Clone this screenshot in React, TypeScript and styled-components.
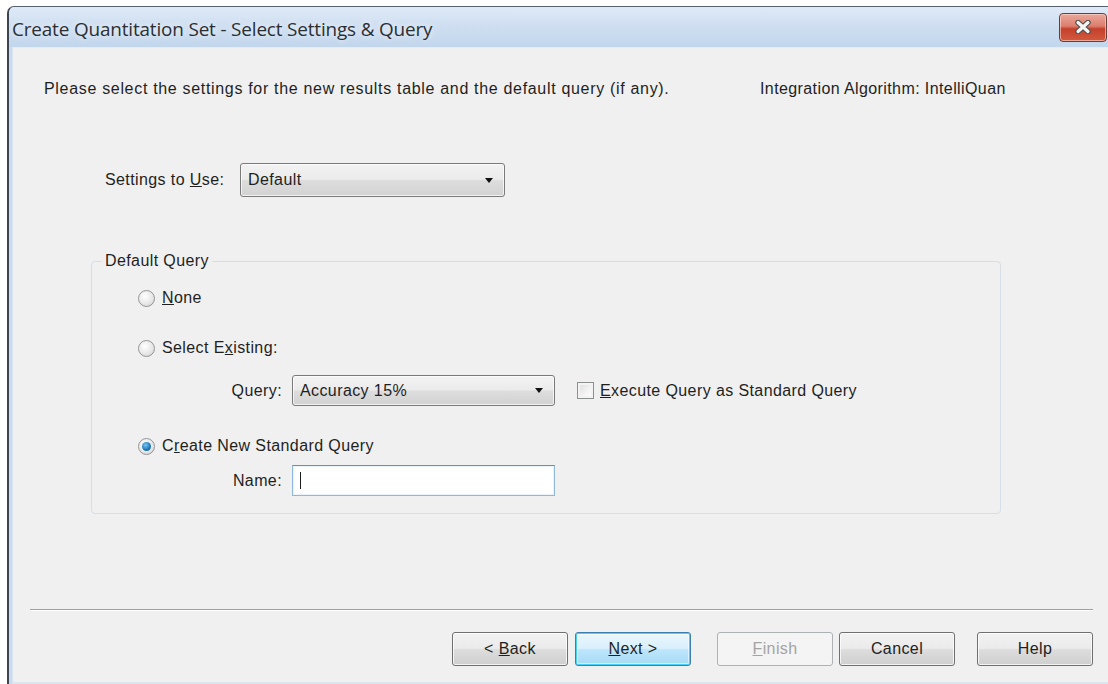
import styled, { createGlobalStyle, css } from 'styled-components';

const GlobalStyle = createGlobalStyle`
  html, body {
    margin: 0;
    padding: 0;
    background: #ffffff;
    overflow: hidden;
  }
  * {
    box-sizing: border-box;
  }
`;

const App = () => {
  return (
    <>
      <GlobalStyle />
      <Window>
        <TitleBar>
          <Title>Create Quantitation Set - Select Settings &amp; Query</Title>
          <CloseButton aria-label='Close'>
            <svg width='20' height='14' viewBox='0 0 20 14'>
              <path
                d='M5 2.5 L15 11.5 M15 2.5 L5 11.5'
                stroke='#4f4f4f'
                strokeWidth='5.5'
                strokeLinecap='round'
              />
              <path
                d='M5 2.5 L15 11.5 M15 2.5 L5 11.5'
                stroke='#f4f4f4'
                strokeWidth='3.2'
                strokeLinecap='round'
              />
            </svg>
          </CloseButton>
        </TitleBar>
        <Body>
          <IntroRow>
            <IntroText>
              Please select the settings for the new results table and the default query (if any).
            </IntroText>
            <Label>Integration Algorithm: IntelliQuan</Label>
          </IntroRow>

          <SettingsRow>
            <SettingsLabel>
              Settings to <u>U</u>se:
            </SettingsLabel>
            <Combo $width={265} $height={34}>
              <span>Default</span>
              <Arrow />
            </Combo>
          </SettingsRow>

          <GroupBox>
            <Legend>Default Query</Legend>

            <OptionRow $gap={13}>
              <Radio />
              <Label>
                <u>N</u>one
              </Label>
            </OptionRow>

            <OptionRow $gap={20}>
              <Radio />
              <Label>
                Select E<u>x</u>isting:
              </Label>
            </OptionRow>

            <SubRow $gap={12}>
              <SubLabel>Query:</SubLabel>
              <Combo $width={263} $height={31}>
                <span>Accuracy 15%</span>
                <Arrow />
              </Combo>
              <CheckRow>
                <CheckBox />
                <Label>
                  <u>E</u>xecute Query as Standard Query
                </Label>
              </CheckRow>
            </SubRow>

            <OptionRow $gap={25}>
              <Radio $checked />
              <Label>
                C<u>r</u>eate New Standard Query
              </Label>
            </OptionRow>

            <SubRow $gap={4}>
              <SubLabel>Name:</SubLabel>
              <NameInput>
                <Caret />
              </NameInput>
            </SubRow>
          </GroupBox>

          <Separator />

          <ButtonBar>
            <WizardButton>
              {'< '}
              <u>B</u>ack
            </WizardButton>
            <WizardButton $variant='default' $gap={7}>
              <u>N</u>ext{' >'}
            </WizardButton>
            <WizardButton $variant='disabled' $gap={26}>
              <u>F</u>inish
            </WizardButton>
            <WizardButton $gap={6}>Cancel</WizardButton>
            <WizardButton $gap={22}>Help</WizardButton>
          </ButtonBar>
        </Body>
      </Window>
    </>
  );
};

export default App;

const uiFont = css`
  font-family: 'Liberation Sans', Arial, sans-serif;
  font-size: 16px;
  letter-spacing: 0.4px;
  color: #1f1f1f;
`;

const Window = styled.div`
  display: flex;
  flex-direction: column;
  width: 1110px;
  height: 678px;
  margin: 6px 0 0 7px;
  border-top: 1px solid #55606c;
  border-left: 2px solid #3d4650;
  border-top-left-radius: 7px;
  background: #c9dbef;
  overflow: hidden;
`;

const TitleBar = styled.div`
  display: flex;
  align-items: center;
  height: 40px;
  padding-left: 3px;
  background: linear-gradient(to bottom, #dfeaf7 0%, #cfdff1 45%, #c2d6ec 100%);
`;

const Title = styled.div`
  flex: 1;
  padding-top: 4px;
  font-family: 'Open Sans', 'Noto Sans', sans-serif;
  font-size: 18.9px;
  letter-spacing: -0.15px;
  color: #2a2f36;
  text-shadow: 0 0 6px rgba(255, 255, 255, 0.9);
`;

const CloseButton = styled.div`
  display: flex;
  align-items: center;
  justify-content: center;
  width: 48px;
  height: 29px;
  margin: 0 10px 0 0;
  border: 1px solid #6e3b38;
  border-radius: 4px;
  background: linear-gradient(to bottom, #e9a89c 0%, #dc7e6d 45%, #c4412c 55%, #d25a3e 100%);
  box-shadow: inset 0 0 0 1px rgba(255, 220, 210, 0.6);
`;

const Body = styled.div`
  flex: 1;
  display: flex;
  flex-direction: column;
  margin-left: 3px;
  background: #f0f0f0;
  border-top: 1px solid #e3ebf4;
  border-left: 1px solid #dbe4ee;
  border-bottom: 2px solid #dde6f0;
`;

const IntroRow = styled.div`
  display: flex;
  align-items: center;
  height: 18px;
  margin-top: 32px;
  padding-left: 31px;
`;

const IntroText = styled.div`
  ${uiFont};
  width: 716px;
  letter-spacing: 0.68px;
  white-space: nowrap;
`;

const Label = styled.span`
  ${uiFont};
  white-space: nowrap;
`;

const SettingsRow = styled.div`
  display: flex;
  align-items: center;
  margin-top: 65px;
  padding-left: 92px;
`;

const SettingsLabel = styled.span`
  ${uiFont};
  width: 135px;
  white-space: nowrap;
`;

const Combo = styled.div<{ $width: number; $height: number }>`
  ${uiFont};
  display: flex;
  align-items: center;
  justify-content: space-between;
  width: ${({ $width }) => $width}px;
  height: ${({ $height }) => $height}px;
  padding: 0 11px 0 7px;
  border: 1px solid #7a7a7a;
  border-radius: 3px;
  background: linear-gradient(to bottom, #f3f3f3 0%, #ebebeb 48%, #dddddd 52%, #d2d2d2 100%);
  box-shadow: inset 0 0 0 1px rgba(255, 255, 255, 0.7);
`;

const Arrow = styled.span`
  width: 0;
  height: 0;
  border-left: 4.5px solid transparent;
  border-right: 4.5px solid transparent;
  border-top: 5px solid #111;
`;

const GroupBox = styled.fieldset`
  width: 910px;
  margin: 55px 0 0 78px;
  padding: 0 0 17px 0;
  border: 1px solid #d5dfe5;
  border-radius: 4px;
`;

const Legend = styled.legend`
  ${uiFont};
  margin-left: 10px;
  padding: 0 3px;
  line-height: 18px;
`;

const OptionRow = styled.div<{ $gap: number }>`
  display: flex;
  align-items: center;
  gap: 7px;
  height: 30px;
  margin-top: ${({ $gap }) => $gap}px;
  padding-left: 46px;
`;

const Radio = styled.span<{ $checked?: boolean }>`
  position: relative;
  width: 17px;
  height: 17px;
  border-radius: 50%;
  border: 1px solid #949494;
  background: radial-gradient(circle at 40% 35%, #ffffff 0%, #e8e8e8 55%, #cdcdcd 100%);
  &::after {
    content: '';
    display: ${({ $checked }) => ($checked ? 'block' : 'none')};
    position: absolute;
    left: 3px;
    top: 3px;
    width: 9px;
    height: 9px;
    border-radius: 50%;
    background: radial-gradient(circle at 40% 35%, #7cc6f0 0%, #1f7cc0 55%, #0b3f78 100%);
  }
`;

const SubRow = styled.div<{ $gap: number }>`
  display: flex;
  align-items: center;
  height: 31px;
  margin-top: ${({ $gap }) => $gap}px;
  padding-left: 130px;
`;

const SubLabel = styled.span`
  ${uiFont};
  width: 60px;
  margin-right: 10px;
  text-align: right;
  white-space: nowrap;
`;

const CheckRow = styled.div`
  display: flex;
  align-items: center;
  gap: 6px;
  margin-left: 22px;
`;

const CheckBox = styled.span`
  width: 17px;
  height: 17px;
  border: 1px solid #8e8f8f;
  background: linear-gradient(135deg, #dcdcdc 0%, #f4f4f4 60%, #ffffff 100%);
  box-shadow: inset 0 0 0 2px #f3f3f3;
`;

const NameInput = styled.div`
  display: flex;
  align-items: center;
  width: 263px;
  height: 31px;
  padding-left: 7px;
  background: #ffffff;
  border: 1px solid #8fb8e0;
  border-top-color: #5d93c8;
  box-shadow: inset 0 0 0 1px #eaf2fb;
`;

const Caret = styled.span`
  width: 1px;
  height: 17px;
  background: #1c1c1c;
`;

const Separator = styled.div`
  width: 1063px;
  height: 2px;
  margin: 95px 0 0 17px;
  border-top: 1px solid #a0a0a0;
  border-bottom: 1px solid #ffffff;
`;

const ButtonBar = styled.div`
  display: flex;
  margin-top: 21px;
  padding-left: 439px;
`;

const WizardButton = styled.div<{ $variant?: 'default' | 'disabled'; $gap?: number }>`
  ${uiFont};
  display: flex;
  align-items: center;
  justify-content: center;
  width: 116px;
  height: 34px;
  margin-left: ${({ $gap }) => $gap ?? 0}px;
  border: 1px solid #707070;
  border-radius: 3px;
  background: linear-gradient(to bottom, #f2f2f2 0%, #ebebeb 48%, #dddddd 52%, #cfcfcf 100%);
  box-shadow: inset 0 0 0 1px rgba(255, 255, 255, 0.75);
  white-space: pre;
  ${({ $variant }) =>
    $variant === 'default' &&
    css`
      border-color: #3c7fb1;
      box-shadow: inset 0 0 0 1px #48d0f7, inset 0 0 0 2px rgba(255, 255, 255, 0.5);
      background: linear-gradient(to bottom, #eaf6fd 0%, #d9f0fc 48%, #bee6fd 52%, #a7d9f5 100%);
    `}
  ${({ $variant }) =>
    $variant === 'disabled' &&
    css`
      color: #a3a3a3;
      border-color: #adb2b5;
      background: #f4f4f4;
      box-shadow: none;
    `}
`;
